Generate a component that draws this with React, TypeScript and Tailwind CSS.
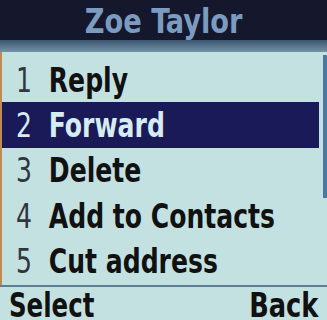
import React from 'react';

const items = [
    {n: '1', label: 'Reply'},
    {n: '2', label: 'Forward'},
    {n: '3', label: 'Delete'},
    {n: '4', label: 'Add to Contacts'},
    {n: '5', label: 'Cut address'},
];

export default function App() {
    return (
        <div
            className="relative w-[327px] h-[320px] overflow-hidden bg-[#c4e1e2] flex flex-col"
            style={{fontFamily: '"DejaVu Sans Condensed", "DejaVu Sans", sans-serif'}}
        >
            {/* Title bar */}
            <header className="h-[40px] bg-[#15172d] flex items-center justify-center">
                <span className="inline-block scale-x-[0.89] text-[34px] font-bold text-[#7b9cc0] leading-none pt-[2px]">Zoe Taylor</span>
            </header>
            <div className="h-[12px] bg-gradient-to-b from-[#3c566f] to-[#7393a8]"/>

            {/* Menu list */}
            <ul className="flex-1 flex flex-col pt-[5px] border-l-2 border-[#c08a50]">
                {items.map((it, i) => {
                    const sel = i === 1;
                    return (
                        <li
                            key={it.n}
                            className={`h-[45.4px] mr-[8px] flex items-center pl-[14px] text-[34px] leading-none ${sel ? 'bg-[#1b1a58] text-[#d6ecf0]' : 'text-[#111]'}`}
                        >
                            <span className="inline-block scale-x-[0.82] origin-left whitespace-nowrap">
                                <span className={`inline-block w-[40px] font-extralight ${sel ? 'text-[#d6ecf0]' : 'text-[#30363e]'}`}>{it.n}</span>
                                <span className="font-bold">{it.label}</span>
                            </span>
                        </li>
                    );
                })}
            </ul>

            {/* Soft keys */}
            <footer className="h-[35px] border-t-2 border-[#5f7f90] flex items-start justify-between px-[9px] pt-[3px] text-[34px] font-bold text-[#111] leading-[30px]">
                <span className="inline-block scale-x-[0.8] origin-left">Select</span>
                <span className="inline-block scale-x-[0.84] origin-right">Back</span>
            </footer>

            {/* Scrollbar */}
            <div className="absolute right-0 top-[55px] w-[4px] h-[143px] bg-[#4a78a2]"/>
        </div>
    );
}
